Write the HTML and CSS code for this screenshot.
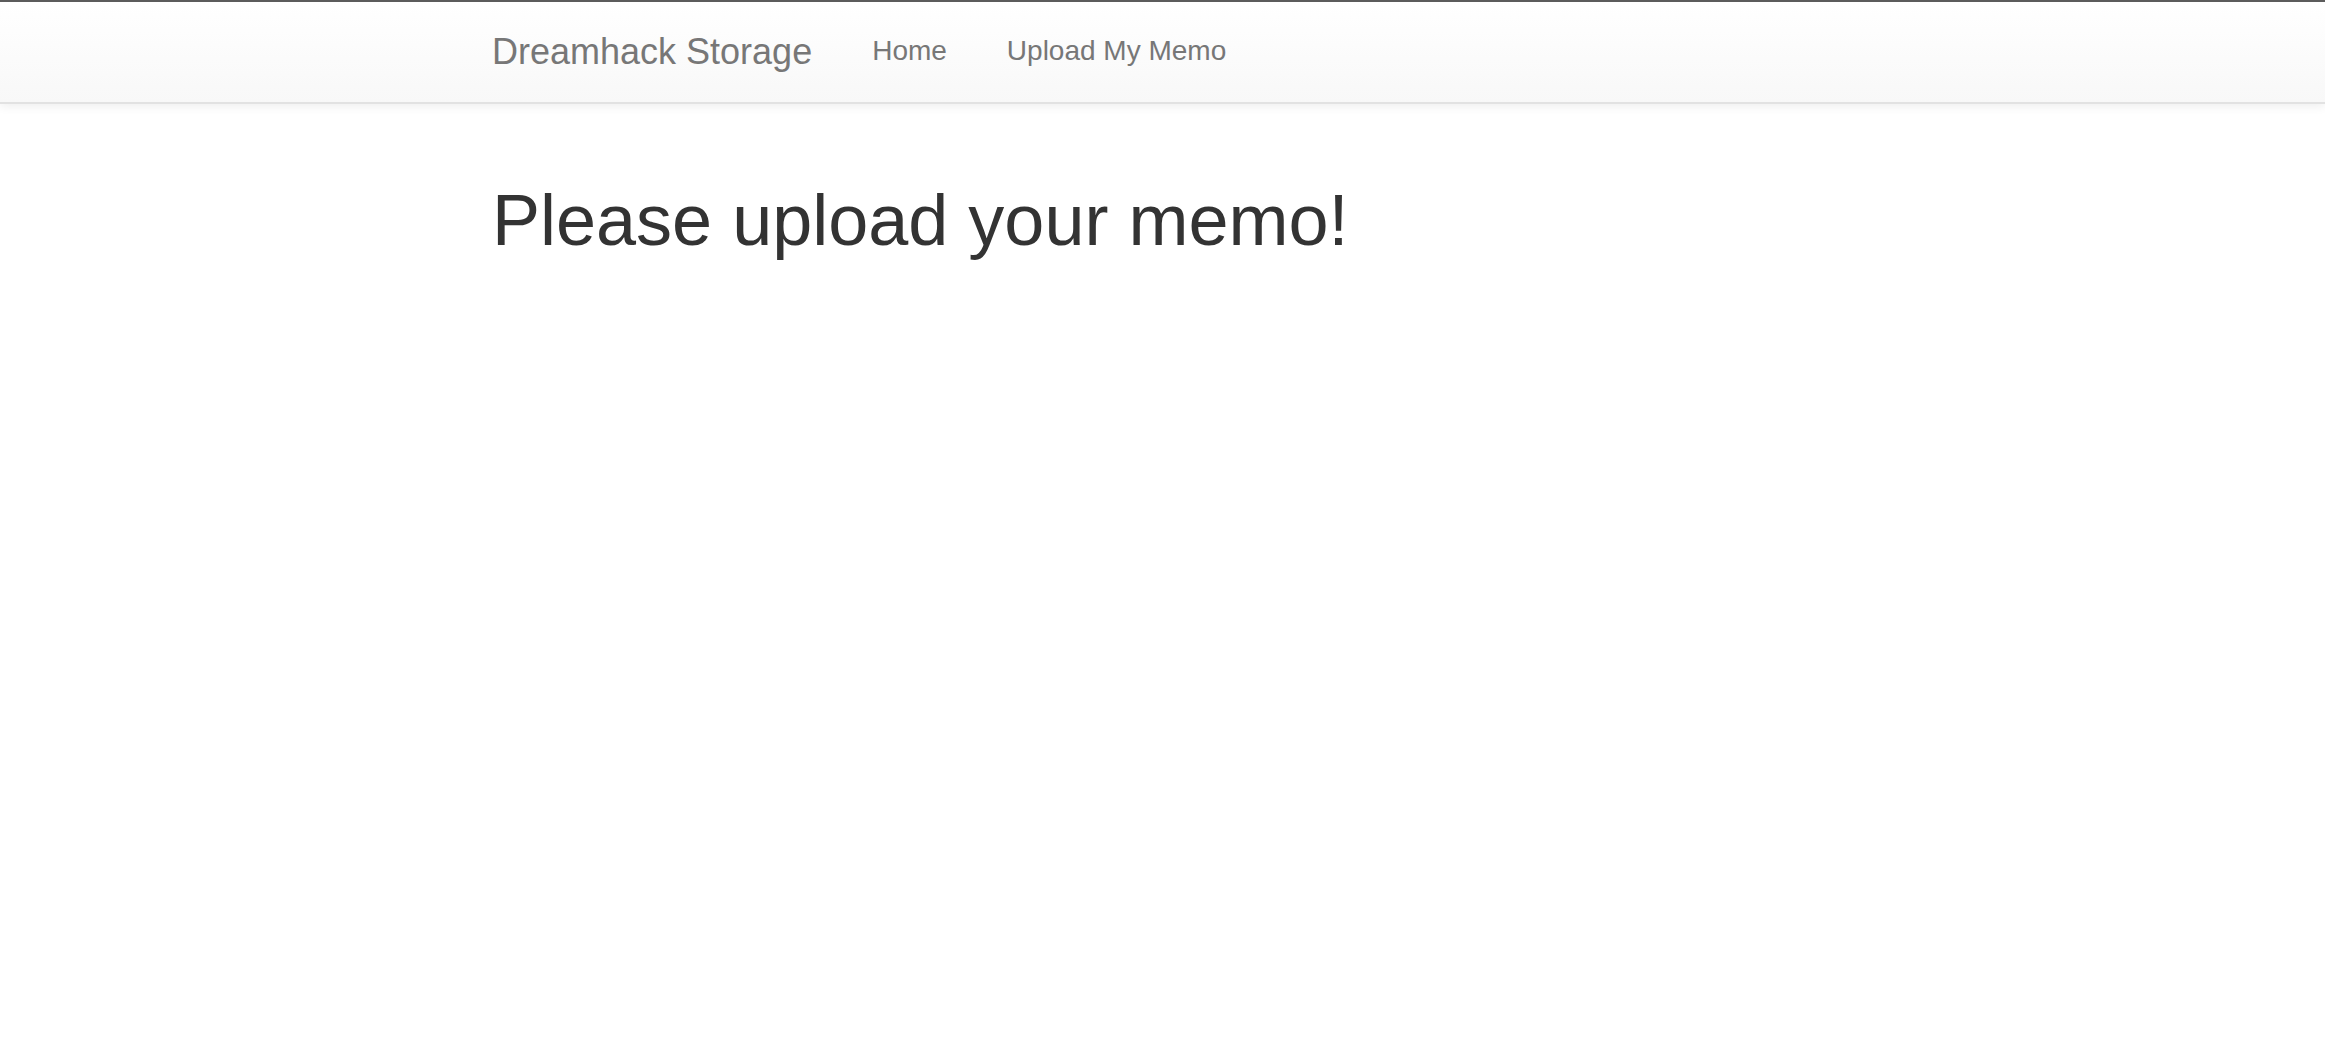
FILE: index.html
```html
<!DOCTYPE html>
<html lang="en">
<head>
<meta charset="utf-8">
<title>Dreamhack Storage</title>
<link rel="stylesheet" href="styles.css">
</head>
<body>
<nav class="navbar">
  <div class="container nav-inner">
    <a class="brand" href="#">Dreamhack Storage</a>
    <ul class="nav-links">
      <li><a href="#">Home</a></li>
      <li><a href="#">Upload My Memo</a></li>
    </ul>
  </div>
</nav>
<main class="container">
  <h1 class="title">Please upload your memo!</h1>
</main>
</body>
</html>
```

FILE: styles.css
```css
html, body {
  margin: 0;
  padding: 0;
  background: #fff;
}
body {
  font-family: "Liberation Sans", Arial, Helvetica, sans-serif;
  color: #333;
}
.container {
  width: 1341px;
  margin: 0 auto;
}
.navbar {
  border-top: 2px solid #5c5c5c;
  border-bottom: 2px solid #e2e2e2;
  background: linear-gradient(to bottom, #ffffff 0%, #f8f8f8 100%);
  box-shadow: inset 0 2px 0 rgba(255,255,255,.15), 0 2px 10px rgba(0,0,0,.075);
}
.nav-inner {
  display: flex;
  align-items: flex-start;
  height: 100px;
}
.brand {
  margin-left: -30px;
  padding: 30px 30px 30px;
  font-size: 36px;
  line-height: 40px;
  color: #777;
  text-decoration: none;
}
.nav-links {
  display: flex;
  list-style: none;
  margin: 0;
  padding: 0;
}
.nav-links a {
  display: block;
  padding: 29px 30px 31px;
  font-size: 28px;
  line-height: 40px;
  color: #777;
  text-decoration: none;
}
.title {
  margin: 77px 0 0;
  font-size: 72px;
  line-height: 1.1;
  font-weight: 500;
  color: #333;
}
```
